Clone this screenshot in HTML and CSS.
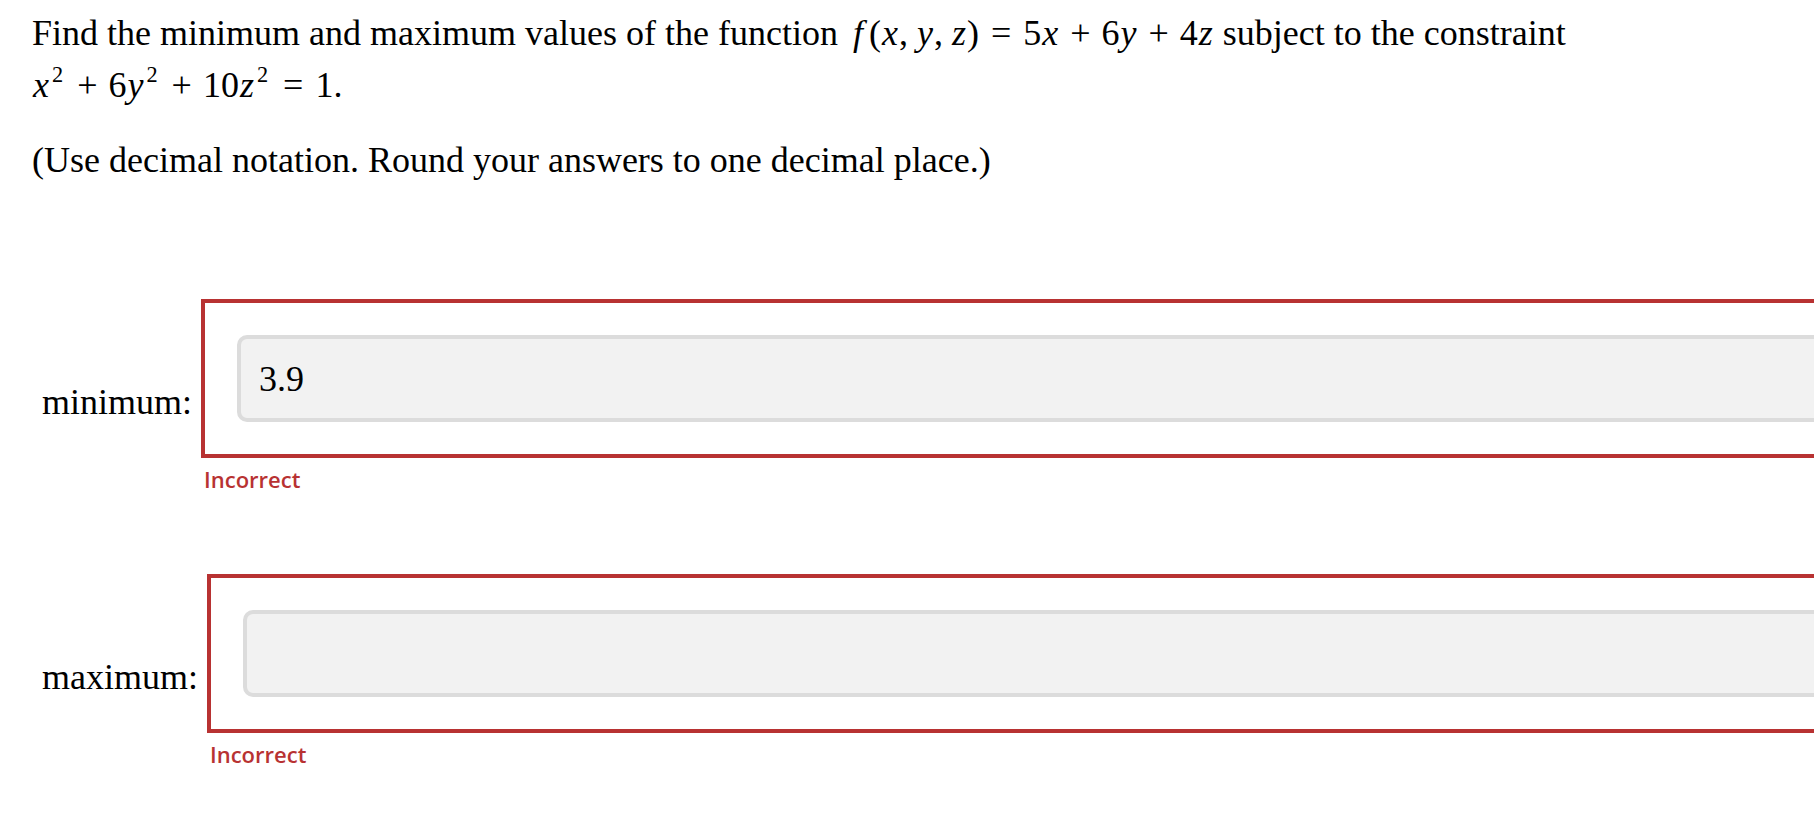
FILE: index.html
```html
<!DOCTYPE html>
<html lang="en">
<head>
<meta charset="utf-8">
<title>Lagrange multipliers</title>
<link rel="stylesheet" href="styles.css">
</head>
<body>
<div class="page">
  <div class="question">
    <p class="prompt">Find the minimum and maximum values of the function <span class="math math-inline"><i class="fn">f</i>(<i>x</i><span class="comma">,</span><i>y</i><span class="comma">,</span><i>z</i>)<span class="rel">=</span>5<i>x</i><span class="bin">+</span>6<i>y</i><span class="bin">+</span>4<i>z</i></span> subject to the constraint<br><span class="math"><i>x</i><sup>2</sup><span class="bin">+</span>6<i>y</i><sup>2</sup><span class="bin">+</span>10<i>z</i><sup>2</sup><span class="rel">=</span>1</span>.</p>
    <p class="note">(Use decimal notation. Round your answers to one decimal place.)</p>
  </div>
  <div class="answers">
    <div class="answer-row">
      <label class="answer-label" for="min">minimum:</label>
      <div class="answer-col">
        <div class="answer-box incorrect"><input class="answer-input" id="min" type="text" value="3.9"></div>
        <div class="feedback">Incorrect</div>
      </div>
    </div>
    <div class="answer-row">
      <label class="answer-label" for="max">maximum:</label>
      <div class="answer-col">
        <div class="answer-box incorrect"><input class="answer-input" id="max" type="text" value=""></div>
        <div class="feedback">Incorrect</div>
      </div>
    </div>
  </div>
</div>
</body>
</html>
```
FILE: styles.css
```css
html, body {
  margin: 0;
  padding: 0;
  background: #ffffff;
  overflow: hidden;
}

.page {
  padding: 7px 0 0 32px;
  font-family: "Liberation Serif", "Times New Roman", serif;
  font-size: 36px;
  color: #000000;
}

.prompt {
  margin: 0;
  line-height: 52px;
}

.note {
  margin: 23px 0 0;
  line-height: 52px;
}

.math-inline {
  margin-left: 5px;
}

.math i {
  font-style: italic;
  margin: 0 1px;
}

.math .fn {
  margin-right: 6px;
}

.math .bin {
  margin: 0 11px;
}

.math .rel {
  margin: 0 12px;
}

.math .comma {
  margin-right: 8px;
}

.math sup {
  font-size: 0.62em;
  vertical-align: 0.68em;
  line-height: 0;
  margin: 0 3px 0 2px;
}

.answers {
  margin-top: 113px;
  display: flex;
  flex-direction: column;
  gap: 80px;
}

.answer-row {
  display: flex;
  align-items: flex-start;
  gap: 9px;
  padding-left: 10px;
}

.answer-label {
  margin-top: 83px;
  line-height: 40px;
  white-space: nowrap;
}

.answer-col {
  flex: none;
  width: 1700px;
}

.answer-box {
  border: 4px solid #b83232;
  padding: 32px;
}

.answer-input {
  display: block;
  width: 100%;
  height: 87px;
  box-sizing: border-box;
  margin: 0;
  padding: 0 18px;
  border: 4px solid #dcdcdc;
  border-radius: 10px;
  background: #f2f2f2;
  font-family: "Liberation Serif", "Times New Roman", serif;
  font-size: 36px;
  color: #000000;
  outline: none;
}

.feedback {
  margin: 6px 0 0 3px;
  font-family: "Open Sans", "Noto Sans", sans-serif;
  font-weight: 600;
  font-size: 22px;
  line-height: 30px;
  color: #b83232;
}
```
